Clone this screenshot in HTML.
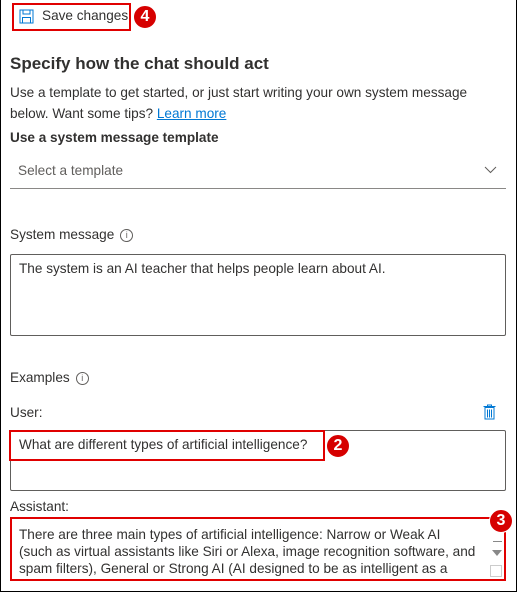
<!DOCTYPE html>
<html><head><style>
body{margin:0;width:517px;height:594px;overflow:hidden;background:#fff;font-family:"Liberation Sans",sans-serif;color:#323130;position:relative}
.a{position:absolute;white-space:nowrap}
.frame{position:absolute;left:0;top:0;width:515px;height:591px;border:1px solid #000;border-top:none}
.red{position:absolute;border:2px solid #e00000;box-sizing:border-box}
.badge{position:absolute;width:22px;height:22px;border-radius:50%;background:#d60000;color:#fff;font-weight:bold;font-size:16px;text-align:center;line-height:22px;border:1px solid #fff}
.ta{position:absolute;border:1px solid #605e5c;border-radius:2px;box-sizing:border-box}
.info{display:inline-block;width:11px;height:11px;border:1px solid #605e5c;border-radius:50%;font-size:9px;line-height:11px;text-align:center;vertical-align:1px;margin-left:6px;color:#605e5c}
.t{font-size:13.6px}
</style></head><body>
<div class="frame"></div>
<div class="red" style="left:12px;top:3px;width:119px;height:28px"></div>
<svg class="a" style="left:19px;top:9px" width="15" height="15" viewBox="0 0 15 15"><rect x="1" y="1" width="13" height="13" fill="none" stroke="#0078d4"/><rect x="4" y="1" width="7" height="4" fill="none" stroke="#0078d4"/><rect x="3.5" y="8.5" width="8" height="5.5" fill="none" stroke="#0078d4"/></svg>
<div class="a t" style="left:42px;top:8px">Save changes</div>
<div class="badge" style="left:133px;top:5px">4</div>
<div class="a" style="left:10px;top:54px;font-size:17px;font-weight:bold">Specify how the chat should act</div>
<div class="a t" style="left:10px;top:82px;line-height:21px">Use a template to get started, or just start writing your own system message<br>below. Want some tips? <span style="color:#0078d4;text-decoration:underline">Learn more</span></div>
<div class="a t" style="left:10px;top:130px;font-weight:bold">Use a system message template</div>
<div class="a" style="left:10px;top:188px;width:496px;height:1px;background:#8a8886"></div>
<div class="a t" style="left:18px;top:163px;color:#605e5c">Select a template</div>
<svg class="a" style="left:484px;top:166px" width="13" height="8"><path d="M1 1l5.5 5.5L12 1" fill="none" stroke="#605e5c"/></svg>
<div class="a t" style="left:10px;top:227px">System message<span class="info">i</span></div>
<div class="ta" style="left:10px;top:254px;width:496px;height:82px"></div>
<div class="a t" style="left:19px;top:261px">The system is an AI teacher that helps people learn about AI.</div>
<div class="a t" style="left:10px;top:370px">Examples<span class="info">i</span></div>
<div class="a t" style="left:10px;top:405px">User:</div>
<svg class="a" style="left:483px;top:404px" width="13" height="16" viewBox="0 0 13 16"><path d="M0.5 2.5h12M4.5 2.5V1h4v1.5M2 3.5h9v11.5H2z" fill="none" stroke="#0078d4"/><path d="M4.5 5.5v8M6.5 5.5v8M8.5 5.5v8" stroke="#0078d4"/></svg>
<div class="ta" style="left:10px;top:430px;width:496px;height:61px"></div>
<div class="red" style="left:9px;top:430px;width:316px;height:31px"></div>
<div class="a t" style="left:19px;top:437px">What are different types of artificial intelligence?</div>
<div class="badge" style="left:326px;top:434px">2</div>
<div class="a t" style="left:10px;top:499px">Assistant:</div>
<div class="ta" style="left:10px;top:517px;width:496px;height:64px"></div>
<div class="a t" style="left:19px;top:526px;line-height:17px;height:51px;overflow:hidden">There are three main types of artificial intelligence: Narrow or Weak AI<br>(such as virtual assistants like Siri or Alexa, image recognition software, and<br>spam filters), General or Strong AI (AI designed to be as intelligent as a</div>
<div class="red" style="left:10px;top:517px;width:496px;height:64px"></div>
<div class="a" style="left:493px;top:541px;width:9px;height:1px;background:#888"></div>
<svg class="a" style="left:492px;top:550px" width="10" height="6"><path d="M0 0h10L5 6z" fill="#888"/></svg>
<div class="a" style="left:490px;top:565px;width:12px;height:12px;border:1px solid #ccc;box-sizing:border-box"></div>
<div class="badge" style="left:489px;top:509px">3</div>
</body></html>
